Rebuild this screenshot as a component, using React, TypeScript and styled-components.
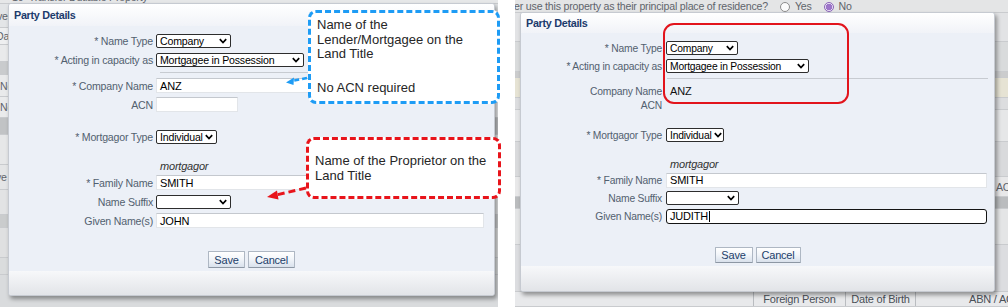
import React from "react";
import styled, { createGlobalStyle } from "styled-components";

const GlobalStyle = createGlobalStyle`
  html, body {
    margin: 0;
    padding: 0;
    background: #ffffff;
  }
  body {
    width: 1008px;
    height: 307px;
    overflow: hidden;
    font-family: "Liberation Sans", Arial, sans-serif;
  }
`;

const FORM_FONT = `"Liberation Sans", Arial, sans-serif`;

type Metrics = {
  labelW: number;
  colGap: number;
  pitch: number;
  font: number;
  padRight: number;
};

const EDIT: Metrics = { labelW: 144, colGap: 3, pitch: 19, font: 10.6, padRight: 10 };
const VIEW: Metrics = { labelW: 141, colGap: 4, pitch: 18, font: 10.3, padRight: 7 };

/* ---------- page & screenshots ---------- */

const Page = styled.div`
  position: relative;
  display: flex;
  width: 1008px;
  height: 307px;
  overflow: hidden;
  background: #ffffff;
`;

const Shot = styled.div<{ $w: number }>`
  position: relative;
  width: ${(p) => p.$w}px;
  height: 307px;
  flex: none;
  overflow: hidden;
  background: #d7d9db;
  font-family: ${FORM_FONT};
  letter-spacing: -0.2px;
`;

const Gutter = styled.div`
  width: 17px;
  flex: none;
`;

/* ---------- page underneath the dialog ---------- */

const Backdrop = styled.div`
  display: flex;
  flex-direction: column;
  height: 100%;
`;

const BgRow = styled.div<{ $h: number; $bg: string; $pad?: number; $end?: boolean }>`
  height: ${(p) => p.$h}px;
  flex: none;
  display: flex;
  align-items: ${(p) => (p.$end ? "flex-end" : "center")};
  gap: 5px;
  padding-left: ${(p) => p.$pad ?? 0}px;
  background: ${(p) => p.$bg};
  border-bottom: 1px solid #c9cbce;
  box-sizing: border-box;
  overflow: hidden;
  white-space: nowrap;
  font-size: 10.6px;
  line-height: 12px;
  color: #5f646b;
`;

const BgFill = styled.div`
  flex: 1;
  background: #d9dbdd;
`;

const CutText = styled.span<{ $shift?: number }>`
  margin-left: ${(p) => p.$shift ?? 0}px;
`;

const Radio = styled.span<{ $on?: boolean }>`
  width: 10px;
  height: 10px;
  flex: none;
  border-radius: 50%;
  box-sizing: border-box;
  border: 1px solid ${(p) => (p.$on ? "#8a63b8" : "#8c8c8c")};
  background: ${(p) =>
    p.$on ? "radial-gradient(circle, #9c74c9 0 3px, #e9e1f3 3.5px)" : "#fbfbfb"};
  margin-left: 7px;
`;

const HeadCells = styled.div`
  display: grid;
  grid-template-columns: 238px 92px 70px 1fr;
  height: 100%;
  width: 100%;
`;

const HeadCell = styled.div<{ $pad?: number }>`
  display: flex;
  align-items: center;
  justify-content: ${(p) => (p.$pad ? "flex-start" : "center")};
  padding-left: ${(p) => p.$pad ?? 0}px;
  border-left: 1px solid #b9bcc0;
  font-size: 11px;
  color: #4a5058;
`;

/* ---------- dialog ---------- */

const Modal = styled.div<{ $left: number; $top: number; $w: number; $h: number }>`
  position: absolute;
  left: ${(p) => p.$left}px;
  top: ${(p) => p.$top}px;
  width: ${(p) => p.$w}px;
  height: ${(p) => p.$h}px;
  display: flex;
  flex-direction: column;
  background: #ecf0f7;
  border: 1px solid #c6cad1;
  border-radius: 3px;
  box-sizing: border-box;
  box-shadow: 2px 3px 4px rgba(0, 0, 0, 0.38);
  overflow: hidden;
`;

const TitleBar = styled.div<{ $h: number }>`
  height: ${(p) => p.$h}px;
  flex: none;
  display: flex;
  align-items: center;
  padding-left: 5px;
  background: linear-gradient(#ffffff, #f1f3f8);
  font-size: 10.8px;
  font-weight: 700;
  letter-spacing: -0.3px;
  color: #1c3b6c;
`;

const Body = styled.div<{ $pt: number }>`
  flex: 1;
  padding-top: ${(p) => p.$pt}px;
`;

const FormRow = styled.div<{ $m: Metrics; $h?: number }>`
  display: grid;
  grid-template-columns: ${(p) => p.$m.labelW}px 1fr;
  column-gap: ${(p) => p.$m.colGap}px;
  align-items: center;
  height: ${(p) => p.$h ?? p.$m.pitch}px;
  padding-right: ${(p) => p.$m.padRight}px;
  font-size: ${(p) => p.$m.font}px;
`;

const Label = styled.div`
  text-align: right;
  white-space: nowrap;
  color: #52606f;
`;

const SelectBox = styled.div<{ $w: number }>`
  width: ${(p) => p.$w}px;
  height: 14px;
  box-sizing: border-box;
  display: flex;
  align-items: center;
  justify-content: space-between;
  gap: 2px;
  padding: 0 3px 0 3px;
  background: #ffffff;
  border: 1px solid #2d2d2d;
  border-radius: 2px;
  color: #000000;
  white-space: nowrap;
  overflow: hidden;
`;

const TextBox = styled.div<{ $w?: number; $focus?: boolean }>`
  width: ${(p) => (p.$w ? `${p.$w}px` : "100%")};
  height: 15px;
  box-sizing: border-box;
  display: flex;
  align-items: center;
  padding-left: 3px;
  background: #ffffff;
  border: ${(p) => (p.$focus ? "1.5px solid #141414" : "1px solid #e2e5e9")};
  border-top-color: ${(p) => (p.$focus ? "#141414" : "#c4c8ce")};
  border-radius: ${(p) => (p.$focus ? 3 : 0)}px;
  color: #000000;
  font-size: 11px;
`;

const Caret = styled.span`
  display: inline-block;
  width: 1px;
  height: 11px;
  margin-left: 1px;
  background: #000000;
`;

const PlainValue = styled.div`
  padding-left: 4px;
  color: #111111;
  font-size: 11px;
`;

const Caption = styled.div`
  padding-left: 4px;
  font-style: italic;
  color: #333333;
  font-size: 11px;
`;

const Separator = styled.div<{ $ml: number; $mr: number; $mt: number; $mb: number }>`
  height: 1px;
  margin: ${(p) => `${p.$mt}px ${p.$mr}px ${p.$mb}px ${p.$ml}px`};
  background: #c7cbd1;
`;

const Spacer = styled.div<{ $h: number }>`
  height: ${(p) => p.$h}px;
`;

const ButtonBar = styled.div<{ $mt: number }>`
  display: flex;
  justify-content: center;
  gap: 3px;
  margin-top: ${(p) => p.$mt}px;
`;

const Btn = styled.button<{ $w: number; $h: number }>`
  width: ${(p) => p.$w}px;
  height: ${(p) => p.$h}px;
  padding: 0;
  font-family: ${FORM_FONT};
  font-size: 11px;
  letter-spacing: -0.2px;
  color: #22406a;
  background: linear-gradient(#ffffff 0%, #f3f6fa 45%, #d9e1ec 100%);
  border: 1px solid #aeb7c3;
  border-bottom-color: #8d97a4;
  border-radius: 1px;
`;

const Footer = styled.div<{ $h: number }>`
  height: ${(p) => p.$h}px;
  flex: none;
  background: linear-gradient(#f7f8fa, #e2e4e8);
`;

/* ---------- document annotations ---------- */

const Callout = styled.div<{
  $left: number;
  $top: number;
  $w: number;
  $h: number;
  $color: string;
  $pt: number;
}>`
  position: absolute;
  left: ${(p) => p.$left}px;
  top: ${(p) => p.$top}px;
  width: ${(p) => p.$w}px;
  height: ${(p) => p.$h}px;
  box-sizing: border-box;
  padding: ${(p) => p.$pt}px 4px 0 6px;
  background: #ffffff;
  border: 3px dashed ${(p) => p.$color};
  border-radius: 8px;
  font-family: "Liberation Sans", Arial, sans-serif;
  font-size: 13px;
  line-height: 14.5px;
  color: #262626;
`;

const CalloutLine = styled.div<{ $mt?: number }>`
  margin-top: ${(p) => p.$mt ?? 0}px;
  white-space: nowrap;
`;

const Highlight = styled.div`
  position: absolute;
  left: 663px;
  top: 23px;
  width: 186px;
  height: 81px;
  box-sizing: border-box;
  border: 2.5px solid #e2141c;
  border-radius: 11px;
`;

const ArrowLayer = styled.svg`
  position: absolute;
  left: 0;
  top: 0;
  pointer-events: none;
`;

/* ---------- small pieces ---------- */

const Chevron = () => (
  <svg width="8" height="6" viewBox="0 0 8 6" style={{ flex: "none" }}>
    <path d="M0.8 1.2l3.2 3.3 3.2-3.3" stroke="#000" strokeWidth="1.7" fill="none" />
  </svg>
);

function Select({ w, value }: { w: number; value: string }) {
  return (
    <SelectBox $w={w}>
      <span>{value}</span>
      <Chevron />
    </SelectBox>
  );
}

function Field({ m, label, children, h }: { m: Metrics; label: string; children?: React.ReactNode; h?: number }) {
  return (
    <FormRow $m={m} $h={h}>
      <Label>{label}</Label>
      {children ?? <span />}
    </FormRow>
  );
}

/* ---------- the two screenshots ---------- */

function EditShot() {
  const m = EDIT;
  return (
    <Shot $w={498}>
      <Backdrop>
        <BgRow $h={4} $bg="#e6e7e8" $pad={12} $end>
          <CutText>10&nbsp;&nbsp;Transfer Dutiable Property</CutText>
        </BgRow>
        <BgRow $h={24} $bg="#e3e5e7">
          <CutText $shift={-3}>ver</CutText>
        </BgRow>
        <BgRow $h={17} $bg="#eeeff0">
          <CutText $shift={-4}>Dat</CutText>
        </BgRow>
        <BgRow $h={17} $bg="#e9eaeb" />
        <BgRow $h={13} $bg="#c9cbcd" />
        <BgRow $h={22} $bg="#e9eaeb">
          <CutText>Ne</CutText>
        </BgRow>
        <BgRow $h={21} $bg="#eaebec">
          <CutText>Ne</CutText>
        </BgRow>
        <BgRow $h={17} $bg="#c1c3c5" />
        <BgRow $h={30} $bg="#e6e7e8" />
        <BgRow $h={25} $bg="#e4e5e6">
          <CutText $shift={-4}>ye</CutText>
        </BgRow>
        <BgRow $h={25} $bg="#e2e3e4" />
        <BgRow $h={13} $bg="#cacccd" />
        <BgRow $h={30} $bg="#dfe0e1" />
        <BgRow $h={17} $bg="#dadcdd" />
        <BgFill />
      </Backdrop>

      <Modal $left={8} $top={3} $w={487} $h={293}>
        <TitleBar $h={22}>Party Details</TitleBar>
        <Body $pt={5}>
          <Field m={m} label="* Name Type">
            <Select w={75} value="Company" />
          </Field>
          <Field m={m} label="* Acting in capacity as">
            <Select w={148} value="Mortgagee in Possession" />
          </Field>
          <Separator $ml={151} $mr={5} $mt={3} $mb={3} />
          <Field m={m} label="* Company Name">
            <TextBox>ANZ</TextBox>
          </Field>
          <Field m={m} label="ACN">
            <TextBox $w={82} />
          </Field>
          <Spacer $h={13} />
          <Field m={m} label="* Mortgagor Type">
            <Select w={61} value="Individual" />
          </Field>
          <Spacer $h={13} />
          <Field m={m} label="" h={14}>
            <Caption>mortgagor</Caption>
          </Field>
          <Field m={m} label="* Family Name">
            <TextBox>SMITH</TextBox>
          </Field>
          <Field m={m} label="Name Suffix">
            <Select w={75} value="" />
          </Field>
          <Field m={m} label="Given Name(s)">
            <TextBox>JOHN</TextBox>
          </Field>
          <ButtonBar $mt={21}>
            <Btn $w={37} $h={17}>Save</Btn>
            <Btn $w={47} $h={17}>Cancel</Btn>
          </ButtonBar>
        </Body>
        <Footer $h={24} />
      </Modal>
    </Shot>
  );
}

function ViewShot() {
  const m = VIEW;
  return (
    <Shot $w={493}>
      <Backdrop>
        <BgRow $h={13} $bg="#e4e5e6" $end>
          <CutText $shift={-6}>ver use this property as their principal place of residence?</CutText>
          <Radio />
          <span>Yes</span>
          <Radio $on />
          <span>No</span>
        </BgRow>
        <BgRow $h={29} $bg="#e2e3e5" />
        <BgRow $h={30} $bg="#d9dbdc" />
        <BgRow $h={6} $bg="#cbcccd" />
        <BgRow $h={20} $bg="#e6e3d4" />
        <BgRow $h={12} $bg="#dcdddf" />
        <BgRow $h={32} $bg="#e6e7e8" />
        <BgRow $h={35} $bg="#d9dadc" />
        <BgRow $h={20} $bg="#e8e8e9" $pad={481}>
          <CutText>ACN</CutText>
        </BgRow>
        <BgRow $h={12} $bg="#babcbe" />
        <BgRow $h={36} $bg="#e4e5e6" />
        <BgRow $h={47} $bg="#dcdde0" />
        <BgRow $h={15} $bg="#e8e9eb">
          <HeadCells>
            <div />
            <HeadCell>Foreign Person</HeadCell>
            <HeadCell>Date of Birth</HeadCell>
            <HeadCell $pad={53}>ABN / ACN</HeadCell>
          </HeadCells>
        </BgRow>
        <BgFill />
      </Backdrop>

      <Modal $left={5} $top={12} $w={475} $h={280}>
        <TitleBar $h={20}>Party Details</TitleBar>
        <Body $pt={6}>
          <Field m={m} label="* Name Type">
            <Select w={72} value="Company" />
          </Field>
          <Field m={m} label="* Acting in capacity as">
            <Select w={143} value="Mortgagee in Possession" />
          </Field>
          <Separator $ml={146} $mr={6} $mt={3} $mb={5} />
          <Field m={m} label="Company Name" h={14}>
            <PlainValue>ANZ</PlainValue>
          </Field>
          <Field m={m} label="ACN" h={14} />
          <Spacer $h={14} />
          <Field m={m} label="* Mortgagor Type">
            <Select w={58} value="Individual" />
          </Field>
          <Spacer $h={13} />
          <Field m={m} label="" h={14}>
            <Caption>mortgagor</Caption>
          </Field>
          <Field m={m} label="* Family Name">
            <TextBox>SMITH</TextBox>
          </Field>
          <Field m={m} label="Name Suffix">
            <Select w={73} value="" />
          </Field>
          <Field m={m} label="Given Name(s)">
            <TextBox $focus>
              JUDITH
              <Caret />
            </TextBox>
          </Field>
          <ButtonBar $mt={22}>
            <Btn $w={38} $h={16}>Save</Btn>
            <Btn $w={45} $h={16}>Cancel</Btn>
          </ButtonBar>
        </Body>
        <Footer $h={25} />
      </Modal>
    </Shot>
  );
}

export default function App() {
  return (
    <>
      <GlobalStyle />
      <Page>
        <EditShot />
        <Gutter />
        <ViewShot />

        <Callout $left={308} $top={10} $w={192} $h={94} $color="#1e9cf5" $pt={5}>
          <CalloutLine>Name of the</CalloutLine>
          <CalloutLine>Lender/Mortgagee on the</CalloutLine>
          <CalloutLine>Land Title</CalloutLine>
          <CalloutLine $mt={19.5}>No ACN required</CalloutLine>
        </Callout>

        <Callout $left={306} $top={137} $w={195} $h={62} $color="#e8141b" $pt={14}>
          <CalloutLine>Name of the Proprietor on the</CalloutLine>
          <CalloutLine>Land Title</CalloutLine>
        </Callout>

        <Highlight />

        <ArrowLayer width="1008" height="307" viewBox="0 0 1008 307">
          <path d="M307 78 L292 81" stroke="#1e9cf5" strokeWidth="2.5" strokeDasharray="5 3" fill="none" />
          <path d="M286 82.5 L294 77.5 L293.5 85 Z" fill="#1e9cf5" />
          <path d="M306 188 L276 195" stroke="#e8141b" strokeWidth="3" strokeDasharray="7 4" fill="none" />
          <path d="M267 197 L277 190.5 L278.5 199.5 Z" fill="#e8141b" />
        </ArrowLayer>
      </Page>
    </>
  );
}
